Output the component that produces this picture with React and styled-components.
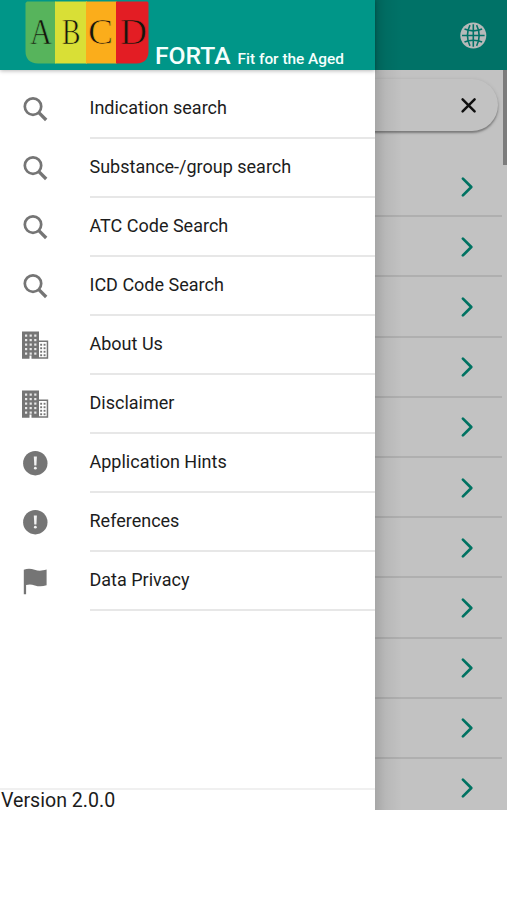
import React from 'react';
import styled, { createGlobalStyle } from 'styled-components';

const GlobalStyle = createGlobalStyle`
  * {
    box-sizing: border-box;
  }

  body {
    margin: 0;
    background: #fff;
    font-family: Roboto, 'Liberation Sans', sans-serif;
    color: #1c1c1c;
  }
`;

const Screen = styled.div`
  position: relative;
  height: 810px;
  background: #fff;
`;

const Page = styled.div`
  height: 100%;
  display: flex;
  flex-direction: column;
  overflow: hidden;
`;

const PageHeader = styled.header`
  flex: none;
  height: 70px;
  padding: 1px 20px 0 0;
  display: flex;
  align-items: center;
  justify-content: flex-end;
  background: #009688;
`;

const PageBody = styled.main`
  flex: 1;
  min-height: 0;
  display: flex;
  align-items: flex-start;
`;

const PageContent = styled.div`
  flex: 1;
`;

const SearchBar = styled.div`
  height: 52px;
  margin: 9px 4px 26px 8px;
  padding-right: 20px;
  display: flex;
  align-items: center;
  justify-content: flex-end;
  border-radius: 26px;
  background: #fff;
  box-shadow: 0 2px 2px rgba(0, 0, 0, 0.3), 0 1px 4px rgba(0, 0, 0, 0.14);
`;

const ResultRow = styled.div`
  height: 60.2px;
  padding: 1px 28px 0 0;
  display: flex;
  align-items: center;
  justify-content: flex-end;
  border-bottom: 2px solid #e6e6e6;
`;

const Scrollbar = styled.div`
  flex: none;
  width: 4px;
  height: 95px;
  margin-left: 1px;
  background: #a3a3a3;
`;

/* dims the page and darkens it towards the drawer's edge */
const Backdrop = styled.div`
  position: absolute;
  inset: 0;
  background:
    linear-gradient(to right, rgba(0, 0, 0, 0.14) 375px, rgba(0, 0, 0, 0.05) 386px, transparent 402px),
    rgba(0, 0, 0, 0.24);
`;

const Drawer = styled.aside`
  position: absolute;
  top: 0;
  bottom: 0;
  left: 0;
  width: 375px;
  display: flex;
  flex-direction: column;
  background: #fff;
`;

const DrawerHeader = styled.header`
  flex: none;
  height: 70px;
  padding-left: 25px;
  display: flex;
  background: #009688;
  box-shadow: 0 1px 4px rgba(0, 0, 0, 0.28);
`;

const Logo = styled.svg`
  flex: none;
  width: 124px;
  height: 63px;
  margin-top: 1px;
  font-family: 'Liberation Serif', serif;
  font-size: 36px;
  fill: #15160c;
  stroke-width: 0.7px;
`;

const Title = styled.h1`
  margin: 42px 0 0 6px;
  font-size: 24.7px;
  line-height: 28px;
  font-weight: 500;
  color: #f5fffd;
  white-space: nowrap;
`;

const Subtitle = styled.small`
  margin-left: 7px;
  font-size: 15.4px;
`;

const Menu = styled.nav`
  flex: 1;
  padding-top: 10px;
`;

const MenuItem = styled.div`
  height: 59px;
  display: flex;
`;

const MenuIcon = styled.div`
  width: 89.5px;
  padding: 13px 0 0 19px;
`;

const MenuLabel = styled.div`
  flex: 1;
  padding-top: 15px;
  border-bottom: 2px solid #e7e7e7;
  font-size: 18px;
  line-height: 26px;
`;

const Version = styled.footer`
  height: 22px;
  padding-left: 1px;
  border-top: 2px solid #f0f0f0;
  font-size: 19.6px;
  line-height: 22px;
`;

const SearchIcon = () => (
  <svg width="32" height="32" viewBox="0 0 32 32" fill="none" stroke="#757575">
    <circle cx="14" cy="13.6" r="8.2" strokeWidth="2.7" />
    <path d="M19.6 19.4l7.6 7.6" strokeWidth="3.3" />
  </svg>
);

const BuildingIcon = () => (
  <svg width="32" height="32" viewBox="0 0 32 32" fill="#757575">
    <path d="M3 2.4h17v27.4h-7.5v-3.3h-2v3.3H3z" />
    <path d="M20 11.6h9.2v18.2H20v-1.5h7.7V13.1H20z" />
    {[6, 10.6, 15.2].map((x) =>
      [5.5, 10, 14.5, 19, 23.5].map((y) => (
        <rect key={`${x}-${y}`} x={x} y={y} width="2.2" height="2.2" fill="#e8e8e8" />
      ))
    )}
    {[21.2, 24.6].map((x) =>
      [14.8, 18.3, 21.8, 25.3].map((y) => (
        <rect key={`${x}-${y}`} x={x} y={y} width="1.9" height="1.9" />
      ))
    )}
  </svg>
);

const AlertIcon = () => (
  <svg width="32" height="32" viewBox="0 0 32 32">
    <circle cx="16.3" cy="16.2" r="12.2" fill="#757575" />
    <path d="M14.8 9.4h3.1l-.5 9h-2.1z" fill="#f2f2f2" />
    <circle cx="16.35" cy="21.2" r="1.4" fill="#f2f2f2" />
  </svg>
);

const FlagIcon = () => (
  <svg width="32" height="32" viewBox="0 0 32 32" fill="#757575">
    <path d="M4.8 4.8C8.7 3.2 12 3.5 15.6 4.8c3.9 1.4 7.2 1.2 12-.2v15.7c-4.6 1.5-8.2 1.3-11.7.1-3.5-1.1-5.8-1.2-8.8-.4v9.3H4.8z" />
  </svg>
);

const GlobeIcon = () => (
  <svg width="28" height="28" viewBox="0 0 28 28" fill="none" stroke="#009688" strokeWidth="1.6">
    <circle cx="14.3" cy="13.5" r="13" fill="#f0f4f4" stroke="none" />
    <path d="M14.3 2.3v22.4M3 13.5h22.6" />
    <path d="M11 3.1c-3.4 6-3.4 14.8 0 20.8M17.6 3.1c3.4 6 3.4 14.8 0 20.8" />
    <path d="M5.5 7.1c5 2.3 12.6 2.3 17.6 0M5.5 19.9c5-2.3 12.6-2.3 17.6 0" />
  </svg>
);

const CloseIcon = () => (
  <svg width="18" height="18" viewBox="0 0 18 18" stroke="#151515" strokeWidth="2.5" strokeLinecap="round">
    <path d="M2.6 3.4l12 12M14.6 3.4l-12 12" />
  </svg>
);

const ChevronIcon = () => (
  <svg width="14" height="22" viewBox="0 0 14 22" fill="none" stroke="#009680" strokeWidth="2.7" strokeLinecap="round" strokeLinejoin="round">
    <path d="M2.9 2.6l8.4 8.4-8.4 8.4" />
  </svg>
);

const menuItems = [
  { label: 'Indication search', Icon: SearchIcon },
  { label: 'Substance-/group search', Icon: SearchIcon },
  { label: 'ATC Code Search', Icon: SearchIcon },
  { label: 'ICD Code Search', Icon: SearchIcon },
  { label: 'About Us', Icon: BuildingIcon },
  { label: 'Disclaimer', Icon: BuildingIcon },
  { label: 'Application Hints', Icon: AlertIcon },
  { label: 'References', Icon: AlertIcon },
  { label: 'Data Privacy', Icon: FlagIcon },
];

const results = Array.from({ length: 11 }, (_, i) => i);

const logoTiles = [
  { letter: 'A', x: 0, width: 31, color: '#57b45c', textX: 5, textWidth: 22 },
  { letter: 'B', x: 30, width: 32, color: '#d9df36', textX: 37, textWidth: 18.5 },
  { letter: 'C', x: 61, width: 31, color: '#fbad1b', textX: 63, textWidth: 25 },
  { letter: 'D', x: 91, width: 33, color: '#e31d24', textX: 95, textWidth: 27 },
];

const FortaLogo = () => (
  <Logo viewBox="0 0 124 63">
    <clipPath id="logo-shape">
      <path d="M2 .5h120q1.5 0 1.5 2V50q0 12-12 12.5H13Q.5 62 .5 50V2z" />
    </clipPath>
    <g clipPath="url(#logo-shape)">
      {logoTiles.map((tile) => (
        <rect key={tile.letter} x={tile.x} width={tile.width} height="63" fill={tile.color} />
      ))}
    </g>
    {logoTiles.map((tile) => (
      <text
        key={tile.letter}
        x={tile.textX}
        y="43"
        textLength={tile.textWidth}
        lengthAdjust="spacingAndGlyphs"
        stroke={tile.color}
      >
        {tile.letter}
      </text>
    ))}
  </Logo>
);

function App() {
  return (
    <Screen>
      <GlobalStyle />
      <Page>
        <PageHeader>
          <GlobeIcon />
        </PageHeader>
        <PageBody>
          <PageContent>
            <SearchBar>
              <CloseIcon />
            </SearchBar>
            {results.map((id) => (
              <ResultRow key={id}>
                <ChevronIcon />
              </ResultRow>
            ))}
          </PageContent>
          <Scrollbar />
        </PageBody>
      </Page>

      <Backdrop />

      <Drawer>
        <DrawerHeader>
          <FortaLogo />
          <Title>
            FORTA
            <Subtitle>Fit for the Aged</Subtitle>
          </Title>
        </DrawerHeader>
        <Menu>
          {menuItems.map(({ label, Icon }) => (
            <MenuItem key={label}>
              <MenuIcon>
                <Icon />
              </MenuIcon>
              <MenuLabel>{label}</MenuLabel>
            </MenuItem>
          ))}
        </Menu>
        <Version>Version 2.0.0</Version>
      </Drawer>
    </Screen>
  );
}

export default App;
